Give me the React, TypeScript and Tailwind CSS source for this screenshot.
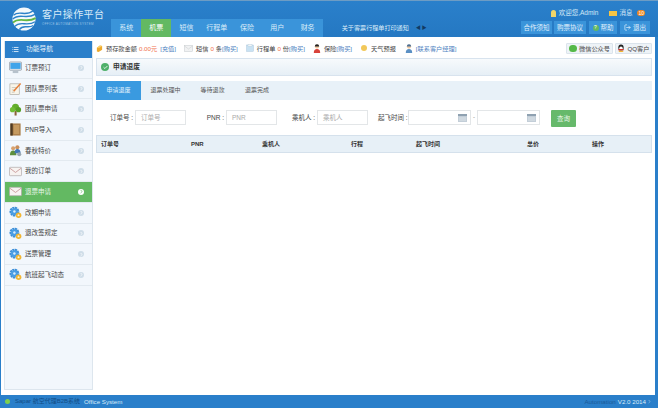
import { Check, ChevronRight, List, LogOut } from "lucide-react";

const NAV = ["系统", "机票", "短信", "行程单", "保险", "用户", "财务"];

function MonitorIcon() {
  return (
    <svg viewBox="0 0 14 14" className="h-[13px] w-[13px]">
      <rect x="0.5" y="1" width="13" height="9" rx="1" fill="#dfe6ec" stroke="#77838e" strokeWidth="0.6" />
      <rect x="1.5" y="2" width="11" height="6.5" fill="#3fa4ea" />
      <rect x="4" y="10.5" width="6" height="2.5" fill="#b7c2cc" />
    </svg>
  );
}

function NoteIcon() {
  return (
    <svg viewBox="0 0 14 14" className="h-[13px] w-[13px]">
      <rect x="1" y="2" width="10" height="11.5" fill="#f8f5ea" stroke="#9c9a90" strokeWidth="0.6" />
      <path d="M3 6h5M3 8.5h4M3 11h3" stroke="#b8b5a6" strokeWidth="0.7" />
      <path d="M5 10 12.5 1.5" stroke="#e5803b" strokeWidth="1.6" />
    </svg>
  );
}

function TreeIcon() {
  return (
    <svg viewBox="0 0 14 14" className="h-[13px] w-[13px]">
      <rect x="6" y="8.5" width="2.2" height="5" fill="#8c6239" />
      <circle cx="7" cy="4.5" r="3.8" fill="#62ae2c" />
      <circle cx="3.8" cy="7.2" r="2.8" fill="#71bd35" />
      <circle cx="10.2" cy="7.2" r="2.8" fill="#559f25" />
    </svg>
  );
}

function BookIcon() {
  return (
    <svg viewBox="0 0 14 14" className="h-[13px] w-[13px]">
      <rect x="1.5" y="0.5" width="11" height="13" fill="#a97d48" />
      <rect x="1.5" y="0.5" width="2.5" height="13" fill="#4d3a24" />
      <rect x="5" y="2" width="6" height="10" fill="#c59a60" />
    </svg>
  );
}

function PeopleIcon() {
  return (
    <svg viewBox="0 0 14 14" className="h-[13px] w-[13px]">
      <circle cx="4.5" cy="4.5" r="2.2" fill="#d8a26e" />
      <path d="M1 12c0-3.5 1.5-5 3.5-5S8 8.5 8 12z" fill="#5d8f3c" />
      <circle cx="9" cy="3.5" r="2.2" fill="#c88f5c" />
      <path d="M6 10c0-3 1.2-4.5 3-4.5S12.5 7 12.5 10z" fill="#4177b5" />
      <circle cx="11" cy="11" r="2.2" fill="#9aa7b3" />
    </svg>
  );
}

function MailIcon() {
  return (
    <svg viewBox="0 0 14 14" className="h-[13px] w-[13px]">
      <rect x="0.5" y="2.5" width="13" height="9" rx="0.8" fill="#f7f3f1" stroke="#a9a3a3" strokeWidth="0.7" />
      <path d="M1 3.5 7 8l6-4.5" fill="none" stroke="#c08a8a" strokeWidth="0.8" />
    </svg>
  );
}

function GearIcon() {
  return (
    <svg viewBox="0 0 14 14" className="h-[13px] w-[13px]">
      <circle cx="5.8" cy="6" r="4" fill="none" stroke="#3d8fd8" strokeWidth="2.6" strokeDasharray="2.2 0.5" />
      <circle cx="5.8" cy="6" r="3.6" fill="#4a9de3" />
      <circle cx="5.8" cy="6" r="1.3" fill="#d9ecfb" />
      <circle cx="10.3" cy="10" r="3" fill="#f2b632" />
      <path d="M9 10h2.6M10.3 8.8V11" stroke="#fff" strokeWidth="0.7" />
    </svg>
  );
}

function CoinIcon() {
  return (
    <svg viewBox="0 0 8 9" className="h-[9px] w-[7px]">
      <path d="M1 3.5 4.5 1 7 1.5V6L3 8.5 1 8z" fill="#eea92b" />
      <path d="M1 3.5 4.5 1 7 1.5 3.5 4z" fill="#f7cf6a" />
    </svg>
  );
}

function SmallMailIcon() {
  return (
    <svg viewBox="0 0 9 7" className="h-[7px] w-[9px]">
      <rect x="0.3" y="0.3" width="8.4" height="6.4" fill="#f1f2f3" stroke="#c6cacd" strokeWidth="0.5" />
      <path d="M0.5 1 4.5 4l4-3" fill="none" stroke="#c6cacd" strokeWidth="0.5" />
    </svg>
  );
}

function TicketIcon() {
  return (
    <svg viewBox="0 0 8 8" className="h-[8px] w-[8px]">
      <rect x="0.5" y="1" width="7" height="6.5" fill="#c9e2f3" stroke="#a5c2d8" strokeWidth="0.4" />
      <rect x="2" y="0.3" width="4" height="2" fill="#f2f5f7" stroke="#a5c2d8" strokeWidth="0.3" />
    </svg>
  );
}

function AgentIcon({ body, hair }: { body: string; hair: string }) {
  return (
    <svg viewBox="0 0 8 9" className="h-[9px] w-[8px]">
      <circle cx="4" cy="2.6" r="2.1" fill="#f0c8a0" />
      <path d="M1.8 2.4A2.2 2.2 0 0 1 6.2 2.4z" fill={hair} />
      <path d="M0.8 9C0.8 6 2 5 4 5s3.2 1 3.2 4z" fill={body} />
    </svg>
  );
}

function PenguinIcon() {
  return (
    <svg viewBox="0 0 9 10" className="h-[9px] w-[8px]">
      <ellipse cx="4.5" cy="4" rx="3" ry="3.6" fill="#222" />
      <ellipse cx="4.5" cy="5" rx="2" ry="2.2" fill="#fff" />
      <rect x="1.5" y="5.6" width="6" height="1.5" fill="#d8322a" />
      <path d="M1.5 9 3 7.5h3L7.5 9z" fill="#f2b632" />
    </svg>
  );
}

const MENU = [
  { label: "订票预订", icon: <MonitorIcon /> },
  { label: "团队票列表", icon: <NoteIcon /> },
  { label: "团队票申请", icon: <TreeIcon /> },
  { label: "PNR导入", icon: <BookIcon /> },
  { label: "春秋特价", icon: <PeopleIcon /> },
  { label: "我的订单", icon: <MailIcon /> },
  { label: "退票申请", icon: <MailIcon />, active: true },
  { label: "改期申请", icon: <GearIcon /> },
  { label: "退改签规定", icon: <GearIcon /> },
  { label: "送票管理", icon: <GearIcon /> },
  { label: "航班起飞动态", icon: <GearIcon /> },
];

const TABS = [
  { label: "申请退废", width: "w-[45px]" },
  { label: "退票处理中", width: "w-[49px]" },
  { label: "等待退款", width: "w-[45px]" },
  { label: "退票完成", width: "w-[44px]" },
];

const COLUMNS = [
  { label: "订单号", width: "w-[90px]" },
  { label: "PNR", width: "w-[71px]" },
  { label: "乘机人", width: "w-[89px]" },
  { label: "行程", width: "w-[65px]" },
  { label: "起飞时间", width: "w-[111px]" },
  { label: "总价", width: "w-[65px]" },
  { label: "操作", width: "w-[40px]" },
];

function Logo() {
  return (
    <svg viewBox="0 0 26 26" className="h-[24px] w-[24px]">
      <circle cx="13" cy="13" r="12.5" fill="#f4f9fc" />
      <path d="M1.5 9C8 3 14 11 23 4" fill="none" stroke="#2c82c9" strokeWidth="1.5" />
      <path d="M0.8 13C8 6 15 14 25 8" fill="none" stroke="#2c82c9" strokeWidth="1.5" />
      <path d="M1 17C8 10 16 18 25.5 12" fill="none" stroke="#64b845" strokeWidth="2" />
      <path d="M3 21C9 14 16 22 25 16" fill="none" stroke="#2c82c9" strokeWidth="1.5" />
      <path d="M8 24.5C12 18 17 24 23 20" fill="none" stroke="#2c82c9" strokeWidth="1.5" />
    </svg>
  );
}

function CalendarGlyph() {
  return (
    <svg viewBox="0 0 9 8" className="h-[8px] w-[9px]">
      <rect width="9" height="8" fill="#c3ced8" />
      <rect y="0" width="9" height="2" fill="#8fa1b1" />
      <path d="M1 4h7M1 6h7" stroke="#e6ecf1" strokeWidth="0.7" />
    </svg>
  );
}

function Field({ label, placeholder, labelWidth }: { label: string; placeholder: string; labelWidth: string }) {
  return (
    <div className="flex items-center">
      <span className={`${labelWidth} whitespace-nowrap text-right text-[6.5px] text-[#444]`}>{label} :</span>
      <div className="ml-[2px] flex h-[15px] w-[51px] items-center border border-[#e3e6e8] pl-[5px] text-[6.5px] text-[#aaa]">
        {placeholder}
      </div>
    </div>
  );
}

function DateField() {
  return (
    <div className="flex h-[15px] w-[63px] items-center justify-end border border-[#e3e6e8] pr-[3px]">
      <CalendarGlyph />
    </div>
  );
}

export default function App() {
  return (
    <div
      className="flex h-[408px] w-[658px] flex-col overflow-hidden bg-[#2a7fca] text-[#444]"
      style={{ fontFamily: '"Liberation Sans", "Noto Sans CJK SC", sans-serif' }}
    >
      {/* header */}
      <header className="flex h-[37px] shrink-0 items-end justify-between border-t border-[#6d9cc4] bg-gradient-to-b from-[#2a80cb] to-[#2578c2]">
        <div className="flex h-full items-end">
          <div className="flex h-full w-[111px] shrink-0 items-start pl-[12px] pt-[6px]">
            <Logo />
            <div className="ml-[6px] mt-[2px] flex flex-col">
              <span className="whitespace-nowrap text-[10px] leading-[12px] tracking-[0.4px] text-[#d9ebf8]">客户操作平台</span>
              <span className="whitespace-nowrap text-[3px] leading-[6px] tracking-[0.3px] text-[#9cc5e6]">OFFICE AUTOMATION SYSTEM</span>
            </div>
          </div>
          <nav className="flex h-[18px] bg-[#3a94da]">
            {NAV.map((n) => (
              <div
                key={n}
                className={
                  n === "机票"
                    ? "flex w-[30px] items-center justify-center bg-[#63b962] text-[7px] text-white"
                    : "flex w-[30.3px] items-center justify-center text-[7px] text-[#dcedf9]"
                }
              >
                {n}
              </div>
            ))}
          </nav>
          <div className="flex h-[18px] items-center pl-[19px] text-[6.1px] text-[#dcedf9]">
            <span className="whitespace-nowrap">关于客票行程单打印通知</span>
            <span className="ml-[7px] text-[5px] tracking-[1px] text-[#123a63]">◀▶</span>
          </div>
        </div>
        <div className="flex h-full flex-col items-end pr-[8px]">
          <div className="flex items-center pr-[5px] pt-[7px] text-[6.5px] leading-[10px] text-[#d6e9f7]">
            <span className="mr-[3px] h-[7px] w-[5px] rounded-t-full bg-[#f1d66a]" />
            <span className="whitespace-nowrap">欢迎您,Admin</span>
            <span className="ml-[11px] mr-[2px] h-[5px] w-[8px] bg-[#f6c544]" />
            <span>消息</span>
            <span className="ml-[5px] rounded-[3px] bg-[#f08a24] px-[1px] text-[5px] leading-[6px] text-white">10</span>
          </div>
          <div className="mt-[3px] flex h-[13px] items-center text-[6.5px] text-[#e2f0fa]">
            <span className="flex h-full w-[31px] items-center justify-center whitespace-nowrap bg-[#3a94da]">合作须知</span>
            <span className="ml-[2px] flex h-full w-[32px] items-center justify-center whitespace-nowrap bg-[#3a94da]">购票协议</span>
            <span className="ml-[3px] flex h-full w-[28px] items-center justify-center gap-[2px] bg-[#3a94da]">
              <span className="flex h-[6px] w-[6px] items-center justify-center rounded-full bg-[#63b962] text-[5px] text-white">?</span>
              帮助
            </span>
            <span className="ml-[3px] flex h-full w-[30px] items-center justify-center gap-[2px] bg-[#3a94da]">
              <LogOut size={7} strokeWidth={2.4} />
              退出
            </span>
          </div>
        </div>
      </header>

      {/* body */}
      <div className="ml-[1px] mr-[3px] flex min-h-0 flex-1 bg-white pl-[3px] pr-[3px] pt-[4px]">
        <aside className="mb-[5px] flex w-[89px] shrink-0 flex-col border-x border-b border-[#dde6ee] bg-[#f2f7fc]">
          <div className="flex h-[17px] shrink-0 items-center bg-[#2b7fca] pl-[7px] text-[6.75px] text-[#e5f1fa]">
            <List size={7} strokeWidth={3} className="mr-[7px]" />
            功能导航
          </div>
          {MENU.map((m) => (
            <div
              key={m.label}
              className={
                m.active
                  ? "flex h-[20.7px] items-center border-b border-[#e3eaf0] bg-[#63b962] pl-[4px] pr-[8px] text-[6.5px] text-[#eaf6ea]"
                  : "flex h-[20.7px] items-center border-b border-[#e3eaf0] pl-[4px] pr-[8px] text-[6.5px] text-[#444]"
              }
            >
              <span className="shrink-0">{m.icon}</span>
              <span className="ml-[3px] flex-1 whitespace-nowrap">{m.label}</span>
              <span
                className={
                  m.active
                    ? "flex h-[6px] w-[6px] items-center justify-center rounded-full bg-white text-[#63b962]"
                    : "flex h-[6px] w-[6px] items-center justify-center rounded-full bg-[#cfdde8] text-white"
                }
              >
                <ChevronRight size={5} strokeWidth={3.5} />
              </span>
            </div>
          ))}
        </aside>

        <main className="ml-[3px] min-w-0 flex-1">
          {/* top info */}
          <div className="flex h-[15px] items-center justify-between whitespace-nowrap text-[6.2px]">
            <div className="flex items-center">
              <span className="mr-[3px] flex"><CoinIcon /></span>
              预存款金额<span className="mx-[2px] text-[#f0714d]">0.00元</span>
              <span className="ml-[1px] text-[#4d7fc0]">[充值]</span>
              <span className="ml-[8px] mr-[3px] flex"><SmallMailIcon /></span>
              短信<span className="mx-[2px] text-[#f0714d]">0</span>条<span className="text-[#4d7fc0]">[购买]</span>
              <span className="ml-[8px] mr-[3px] flex"><TicketIcon /></span>
              行程单<span className="mx-[2px] text-[#f0714d]">0</span>份<span className="text-[#4d7fc0]">[购买]</span>
              <span className="ml-[8px] mr-[3px] flex"><AgentIcon body="#d8423a" hair="#222" /></span>
              保险<span className="text-[#4d7fc0]">[购买]</span>
              <span className="ml-[9px] mr-[4px] h-[6px] w-[6px] rounded-full bg-[#f2c85a]" />
              天气预报
              <span className="ml-[9px] mr-[3px] flex"><AgentIcon body="#5b90c4" hair="#4a6f96" /></span>
              <span className="text-[#4d7fc0]">[联系客户经理]</span>
            </div>
            <div className="flex items-center gap-[2px]">
              <span className="flex h-[11px] w-[47px] items-center justify-center gap-[2px] rounded-[1px] border border-[#dbe4ec] bg-[#eef3f7] text-[6.2px]">
                <span className="h-[7px] w-[8px] rounded-full bg-[#55b948]" />
                微信公众号
              </span>
              <span className="flex h-[11px] w-[37px] items-center justify-center gap-[2px] rounded-[1px] border border-[#dbe4ec] bg-[#eef3f7] text-[6.2px]">
                <PenguinIcon />
                QQ客户
              </span>
            </div>
          </div>

          {/* title */}
          <div className="mt-[2px] flex h-[18px] items-center border border-[#d8e3ee] bg-gradient-to-b from-[#f7fafc] to-[#e6eff6] pl-[4px] text-[6.75px] font-bold text-[#333]">
            <span className="mr-[4px] flex h-[8px] w-[8px] items-center justify-center rounded-full bg-[#4fb06a] text-white">
              <Check size={5} strokeWidth={4} />
            </span>
            申请退废
          </div>

          {/* tabs */}
          <div className="mt-[5px] flex h-[19px] items-stretch bg-[#e8f1f8] text-[6px] text-[#555]">
            {TABS.map((t, i) => (
              <div
                key={t.label}
                className={
                  i === 0
                    ? `flex ${t.width} items-center justify-center bg-[#3a9ae0] text-[#e3f2fc]`
                    : `flex ${t.width} items-center justify-center`
                }
              >
                {t.label}
              </div>
            ))}
          </div>

          {/* search form */}
          <div className="mt-[10px] flex items-start">
            <Field label="订单号" placeholder="订单号" labelWidth="w-[37px]" />
            <Field label="PNR" placeholder="PNR" labelWidth="w-[38px]" />
            <Field label="乘机人" placeholder="乘机人" labelWidth="w-[38px]" />
            <div className="ml-[10px] flex h-[15px] w-[30px] items-center whitespace-nowrap text-[6.5px] text-[#444]">起飞时间 :</div>
            <DateField />
            <span className="flex h-[15px] w-[6px] items-center justify-center text-[6px] text-[#777]">-</span>
            <DateField />
            <button className="ml-[11px] flex h-[17px] w-[25px] items-center justify-center rounded-[1px] bg-[#66b96b] text-[6.5px] text-[#e8f6e8]">
              查询
            </button>
          </div>

          {/* table */}
          <div className="mt-[8px] flex h-[18px] items-center border border-[#d5e1ec] bg-[#e7f0f7] pl-[4px] text-[6px] font-bold text-[#333]">
            {COLUMNS.map((c) => (
              <span key={c.label} className={`${c.width} shrink-0`}>
                {c.label}
              </span>
            ))}
          </div>
        </main>
      </div>

      {/* footer */}
      <footer className="flex h-[13px] shrink-0 items-center justify-between pl-[5px] pr-[6px]">
        <div className="flex items-center whitespace-nowrap">
          <span className="mr-[5px] h-[5px] w-[5px] rounded-full bg-[#7ed04e]" />
          <span className="text-[6px] text-[#114c86]">Sapar 航空代理B2B系统</span>
          <span className="ml-[4px] text-[6.2px] text-[#d9ebf8]">Office System</span>
        </div>
        <div className="flex items-center whitespace-nowrap">
          <span className="text-[6.2px] text-[#1a5a99]">Automation</span>
          <span className="ml-[2px] text-[6.2px] text-[#d9ebf8]">V2.0 2014</span>
          <ChevronRight size={5} strokeWidth={3} className="ml-[1px] text-[#a8cdea]" />
        </div>
      </footer>
    </div>
  );
}
